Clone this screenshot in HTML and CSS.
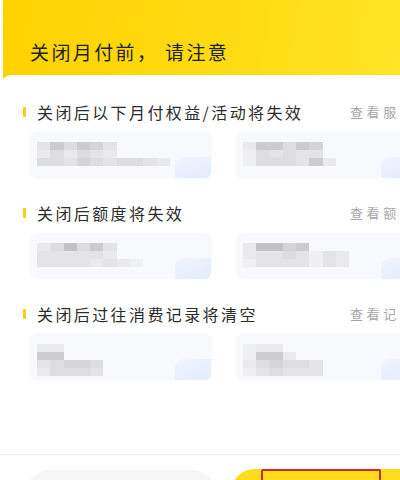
FILE: index.html
```html
<!DOCTYPE html>
<html lang="zh-CN">
<head>
<meta charset="utf-8">
<title>关闭月付</title>
<link rel="stylesheet" href="styles.css">
</head>
<body>
<div class="page">
  <header class="hero">
    <h1 class="hero-title">关闭月付前， 请注意</h1>
  </header>
  <main class="sheet">
    <section class="sec">
      <div class="sec-head">
        <span class="sec-bar"></span>
        <h2 class="sec-title">关闭后以下月付权益/活动将失效</h2>
        <span class="sec-link">查看服务</span>
      </div>
      <div class="cards">
        <div class="card">
          <div class="mosaic">
            <div class="mrow"><i class="s5"></i><i class="s2"></i><i class="s4"></i><i class="s2"></i><i class="s3"></i><i class="s5"></i></div>
            <div class="mrow"><i class="s6"></i><i class="s4"></i><i class="s6"></i><i class="s4"></i><i class="s5"></i><i class="s6"></i></div>
            <div class="mrow"><i class="s4"></i><i class="s4"></i><i class="s5"></i><i class="s3"></i><i class="s4"></i><i class="s5"></i><i class="s4"></i><i class="s4"></i><i class="s5"></i><i class="s6"></i></div>
          </div>
          <span class="blob"></span>
        </div>
        <div class="card">
          <div class="mosaic">
            <div class="mrow"><i class="s6"></i><i class="s2"></i><i class="s2"></i><i class="s4"></i><i class="s2"></i><i class="s3"></i></div>
            <div class="mrow"><i class="s7"></i><i class="s4"></i><i class="s5"></i><i class="s4"></i><i class="s5"></i><i class="s5"></i></div>
            <div class="mrow"><i class="s7"></i><i class="s4"></i><i class="s4"></i><i class="s4"></i><i class="s5"></i><i class="s2"></i><i class="s6"></i></div>
          </div>
          <span class="blob"></span>
        </div>
      </div>
    </section>

    <section class="sec">
      <div class="sec-head">
        <span class="sec-bar"></span>
        <h2 class="sec-title">关闭后额度将失效</h2>
        <span class="sec-link">查看额度</span>
      </div>
      <div class="cards">
        <div class="card">
          <div class="mosaic">
            <div class="mrow"><i class="s6"></i><i class="s4"></i><i class="s1"></i><i class="s4"></i><i class="s2"></i><i class="s5"></i></div>
            <div class="mrow"><i class="s5"></i><i class="s5"></i><i class="s5"></i><i class="s5"></i><i class="s5"></i><i class="s6"></i></div>
            <div class="mrow"><i class="s5"></i><i class="s5"></i><i class="s5"></i><i class="s5"></i><i class="s6"></i><i class="s5"></i><i class="s6"></i><i class="s7"></i></div>
          </div>
          <span class="blob"></span>
        </div>
        <div class="card">
          <div class="mosaic">
            <div class="mrow"><i class="s6"></i><i class="s1"></i><i class="s1"></i><i class="s3"></i><i class="s2"></i></div>
            <div class="mrow"><i class="s6"></i><i class="s5"></i><i class="s5"></i><i class="s4"></i><i class="s5"></i><i class="s7"></i><i class="s5"></i><i class="s6"></i></div>
            <div class="mrow"><i class="s7"></i><i class="s5"></i><i class="s5"></i><i class="s5"></i><i class="s5"></i><i class="s7"></i><i class="s5"></i><i class="s6"></i></div>
          </div>
          <span class="blob"></span>
        </div>
      </div>
    </section>

    <section class="sec">
      <div class="sec-head">
        <span class="sec-bar"></span>
        <h2 class="sec-title">关闭后过往消费记录将清空</h2>
        <span class="sec-link">查看记录</span>
      </div>
      <div class="cards">
        <div class="card">
          <div class="mosaic">
            <div class="mrow"><i class="s6"></i><i class="s6"></i></div>
            <div class="mrow"><i class="s2"></i><i class="s2"></i></div>
            <div class="mrow"><i class="s5"></i><i class="s4"></i><i class="s3"></i><i class="s3"></i><i class="s4"></i></div>
            <div class="mrow"><i class="s6"></i><i class="s4"></i><i class="s4"></i><i class="s4"></i><i class="s5"></i></div>
          </div>
          <span class="blob"></span>
        </div>
        <div class="card">
          <div class="mosaic">
            <div class="mrow"><i class="s7"></i><i class="s6"></i><i class="s6"></i></div>
            <div class="mrow"><i class="s7"></i><i class="s2"></i><i class="s2"></i><i class="s6"></i></div>
            <div class="mrow"><i class="s6"></i><i class="s4"></i><i class="s3"></i><i class="s4"></i><i class="s4"></i><i class="s5"></i></div>
            <div class="mrow"><i class="s7"></i><i class="s5"></i><i class="s4"></i><i class="s5"></i><i class="s5"></i><i class="s5"></i></div>
          </div>
          <span class="blob"></span>
        </div>
      </div>
    </section>
  </main>
  <footer class="foot">
    <button class="btn btn-cancel" type="button"></button>
    <button class="btn btn-confirm" type="button"><span class="mark"></span></button>
  </footer>
</div>
</body>
</html>
```

FILE: styles.css
```css
html, body {
  margin: 0;
  padding: 0;
  overflow: hidden;
  background: #ffffff;
}

body {
  width: 400px;
  height: 480px;
  font-family: "Noto Sans CJK SC", "Noto Sans", sans-serif;
}

.page {
  width: 440px;
  height: 480px;
  display: flex;
  flex-direction: column;
  background: #ffffff;
}

.hero {
  margin-left: 3px;
  height: 88px;
  padding: 39px 0 0 27px;
  box-sizing: border-box;
  background: linear-gradient(100deg, #ffd200 0%, #ffdc14 55%, #ffe62c 100%);
}

.hero-title {
  margin: 0;
  font-size: 19px;
  line-height: 26px;
  font-weight: 400;
  letter-spacing: 2.4px;
  color: #1f1f1f;
}

.sheet {
  margin-top: -13px;
  border-radius: 12px 12px 0 0;
  background: #ffffff;
  padding-top: 26px;
  display: flex;
  flex-direction: column;
  gap: 24px;
}

.sec-head {
  display: flex;
  align-items: center;
  height: 22px;
  padding-left: 23px;
}

.sec-bar {
  flex: none;
  width: 3px;
  height: 10px;
  border-radius: 1px;
  background: #ffcf00;
  margin-right: 11px;
}

.sec-title {
  flex: 0 0 313px;
  margin: 0;
  font-size: 16px;
  line-height: 22px;
  font-weight: 400;
  letter-spacing: 2.4px;
  color: #2b2b2b;
  white-space: nowrap;
}

.sec-link {
  font-size: 13px;
  line-height: 22px;
  letter-spacing: 3.6px;
  color: #a6a6a6;
  white-space: nowrap;
}

.cards {
  display: flex;
  gap: 26px;
  padding-left: 31px;
  margin-top: 9px;
}

.card {
  position: relative;
  flex: none;
  width: 180px;
  height: 46px;
  box-sizing: border-box;
  padding: 10px 0 0 6px;
  border-radius: 6px;
  background: #f8f9fd;
  box-shadow: 0 0 3px rgba(40, 60, 120, 0.05);
  overflow: hidden;
}

.mosaic {
  display: flex;
  flex-direction: column;
}

.mrow {
  display: flex;
  height: 8px;
}

.mrow i {
  display: block;
  width: 13.3px;
  height: 8px;
}

.s1 { background: #c1c1c6; }
.s2 { background: #cbcbd0; }
.s3 { background: #d4d4d9; }
.s4 { background: #dcdce1; }
.s5 { background: #e3e3e8; }
.s6 { background: #eaeaee; }
.s7 { background: #f0f0f4; }

.blob {
  position: absolute;
  right: 0;
  bottom: 0;
  width: 36px;
  height: 21px;
  border-radius: 9px 0 6px 0;
  background: linear-gradient(160deg, #f0f4fd 0%, #e4ecfb 100%);
}

.foot {
  flex: none;
  margin-top: auto;
  height: 11px;
  border-top: 1px solid #f0f0f0;
  padding: 14px 0 0 27px;
  display: flex;
  align-items: flex-start;
  gap: 17px;
  overflow: hidden;
}

.btn {
  flex: none;
  width: 188px;
  height: 44px;
  border: 0;
  padding: 0;
  border-radius: 22px;
  position: relative;
}

.btn-cancel {
  background: #f5f6f8;
  margin-top: 1px;
}

.btn-confirm {
  background: #ffdc1e;
}

.mark {
  position: absolute;
  left: 29px;
  top: 0;
  width: 116px;
  height: 40px;
  border: 2px solid #d2281c;
  border-radius: 2px;
}
```
